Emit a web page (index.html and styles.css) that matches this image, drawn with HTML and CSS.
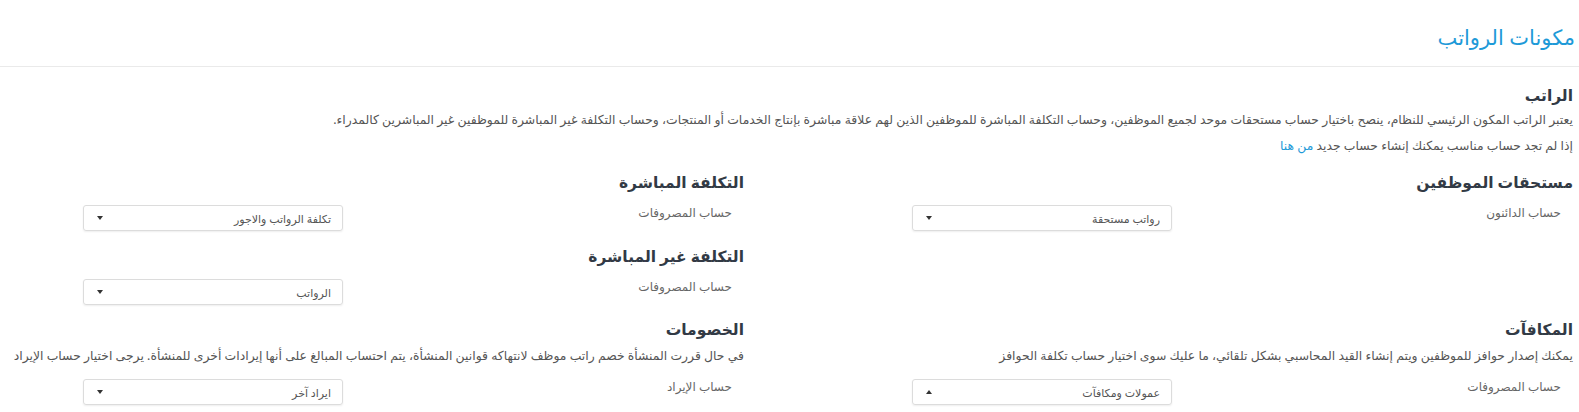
FILE: index.html
```html
<!DOCTYPE html>
<html lang="ar" dir="rtl">
<head>
<meta charset="utf-8">
<title>مكونات الرواتب</title>
<link rel="stylesheet" href="styles.css">
</head>
<body>
<div class="page">
  <header class="title-bar">
    <h1 class="page-title">مكونات الرواتب</h1>
  </header>
  <section class="intro">
    <h2 class="sec-title">الراتب</h2>
    <p class="text">يعتبر الراتب المكون الرئيسي للنظام، ينصح باختيار حساب مستحقات موحد لجميع الموظفين، وحساب التكلفة المباشرة للموظفين الذين لهم علاقة مباشرة بإنتاج الخدمات أو المنتجات، وحساب التكلفة غير المباشرة للموظفين غير المباشرين كالمدراء.</p>
    <p class="text note">إذا لم تجد حساب مناسب يمكنك إنشاء حساب جديد <a class="link" href="#">من هنا</a></p>
  </section>
  <div class="grid">
    <div class="col col-right">
      <h3 class="sec-title">مستحقات الموظفين</h3>
      <div class="form-row">
        <span class="label">حساب الدائنون</span>
        <div class="select"><span class="select-text">رواتب مستحقة</span><span class="caret"></span></div>
      </div>
    </div>
    <div class="col col-left">
      <h3 class="sec-title">التكلفة المباشرة</h3>
      <div class="form-row">
        <span class="label">حساب المصروفات</span>
        <div class="select"><span class="select-text">تكلفة الرواتب والاجور</span><span class="caret"></span></div>
      </div>
      <h3 class="sec-title sub">التكلفة غير المباشرة</h3>
      <div class="form-row">
        <span class="label">حساب المصروفات</span>
        <div class="select"><span class="select-text">الرواتب</span><span class="caret"></span></div>
      </div>
    </div>
    <div class="col col-right">
      <h3 class="sec-title">المكافآت</h3>
      <p class="text desc">يمكنك إصدار حوافز للموظفين ويتم إنشاء القيد المحاسبي بشكل تلقائي، ما عليك سوى اختيار حساب تكلفة الحوافز</p>
      <div class="form-row">
        <span class="label">حساب المصروفات</span>
        <div class="select"><span class="select-text">عمولات ومكافآت</span><span class="caret up"></span></div>
      </div>
    </div>
    <div class="col col-left">
      <h3 class="sec-title">الخصومات</h3>
      <p class="text desc nowrap">في حال قررت المنشأة خصم راتب موظف لانتهاكه قوانين المنشأة، يتم احتساب المبالغ على أنها إيرادات أخرى للمنشأة. يرجى اختيار حساب الإيراد</p>
      <div class="form-row">
        <span class="label">حساب الإيراد</span>
        <div class="select"><span class="select-text">ايراد آخر</span><span class="caret"></span></div>
      </div>
    </div>
  </div>
</div>
</body>
</html>
```

FILE: styles.css
```css
* { box-sizing: border-box; }
html, body { margin: 0; padding: 0; background: #fff; }
body {
  font-family: "Noto Sans", "DejaVu Sans", sans-serif;
  color: #555;
  font-size: 12px;
}
.page { direction: rtl; overflow: hidden; height: 412px; }
.title-bar {
  height: 67px;
  border-bottom: 1px solid #eaeaea;
  padding: 23px 4px 0 16px;
}
.page-title {
  margin: 0;
  font-size: 21px;
  font-weight: 400;
  line-height: 28px;
  color: #1e9ad8;
}
.intro { padding: 16px 6px 0 20px; }
.sec-title {
  margin: 0;
  font-size: 15.5px;
  font-weight: 700;
  line-height: 24px;
  color: #323a45;
}
.text {
  margin: 0;
  line-height: 26px;
  color: #555;
  font-size: 12.4px;
}
.link { color: #1e9ad8; text-decoration: none; }
.grid {
  display: grid;
  grid-template-columns: 829px 1fr;
  row-gap: 12px;
  padding: 11px 6px 0 0;
}
.sec-title.sub { margin-top: 13px; }
.form-row {
  display: flex;
  align-items: flex-start;
  margin-top: 11px;
}
.label {
  width: 401px;
  padding-right: 12px;
  line-height: 16px;
  color: #666;
  font-size: 12px;
}
.select {
  width: 260px;
  height: 26px;
  border: 1px solid #dcdcdc;
  border-radius: 3px;
  box-shadow: 0 1px 2px rgba(0,0,0,0.07);
  display: flex;
  align-items: center;
  justify-content: space-between;
  padding: 0 11px 0 13px;
  color: #555;
  font-size: 11px;
}
.caret {
  width: 0; height: 0;
  border-left: 3.5px solid transparent;
  border-right: 3.5px solid transparent;
  border-top: 4px solid #333;
}
.caret.up { border-top: 0; border-bottom: 4px solid #333; }
.desc { margin-top: 3px; line-height: 24px; }
.nowrap { white-space: nowrap; }
```
